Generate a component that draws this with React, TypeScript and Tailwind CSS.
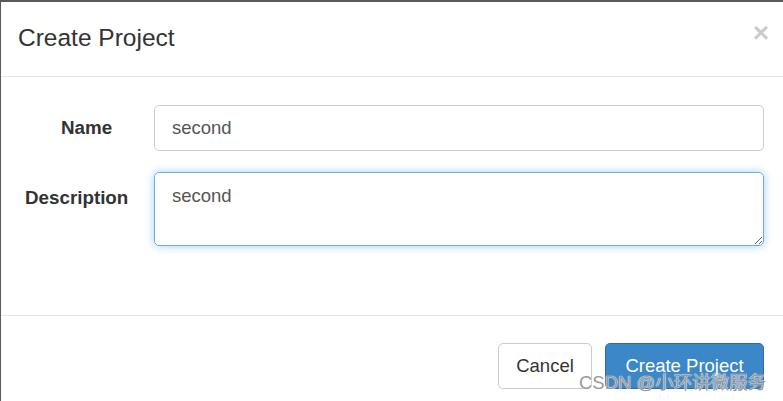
import { useState } from "react";

// 新建项目弹窗 (Bootstrap modal 风格，放大 133%)
export default function App() {
  const [name, setName] = useState("second");
  const [description, setDescription] = useState("second");

  return (
    <div
      className="relative w-[783px] h-[401px] overflow-hidden bg-white border-t-2 border-l border-[#5a5a5a] text-[#333]"
      style={{ fontFamily: '"Liberation Sans", Arial, "Noto Sans CJK SC", sans-serif' }}
    >
      {/* header */}
      <div className="flex items-center justify-between h-[75px] pl-[17px] pr-[14px] border-b border-[#e5e5e5]">
        <h4 className="text-[24.5px] leading-none mt-[-2px]">Create Project</h4>
        <button className="text-[28px] font-bold leading-none text-black opacity-20 mt-[-12px]">×</button>
      </div>

      {/* body */}
      <form className="pt-[28px] pb-[69px] pr-[19px] flex flex-col gap-[21px]">
        <div className="flex items-center">
          <label className="w-[153px] pl-[60px] text-[18.8px] font-bold">Name</label>
          <input
            value={name}
            onChange={(e) => setName(e.target.value)}
            className="flex-1 h-[46px] px-[17px] text-[18.5px] text-[#555] border border-[#ccc] rounded-[5px] outline-none"
          />
        </div>
        <div className="flex items-start">
          <label className="w-[153px] pl-[24px] pt-[12px] text-[18.8px] font-bold">Description</label>
          <textarea
            value={description}
            onChange={(e) => setDescription(e.target.value)}
            className="flex-1 h-[74px] px-[17px] pt-[10px] text-[18.5px] leading-[26px] text-[#555] border border-[#66afe9] rounded-[5px] outline-none shadow-[0_0_8px_rgba(102,175,233,0.6)]"
          />
        </div>
      </form>

      {/* footer */}
      <div className="flex justify-end gap-[13px] border-t border-[#e5e5e5] pt-[27px] pr-[19px]">
        <button className="w-[94px] h-[46px] text-[18.5px] text-[#333] bg-white border border-[#ccc] rounded-[5px]">
          Cancel
        </button>
        <button className="w-[159px] h-[46px] text-[18.5px] text-white bg-[#3c87c8] border border-[#2e6da4] rounded-[5px]">
          Create Project
        </button>
      </div>

      {/* watermark */}
      <span
        className="absolute left-[578px] top-[367px] text-[18.5px] text-[#999]"
        style={{ textShadow: "0 0 1px #fff, 0 0 1px #fff" }}
      >
        CSDN @小环讲微服务
      </span>
    </div>
  );
}
